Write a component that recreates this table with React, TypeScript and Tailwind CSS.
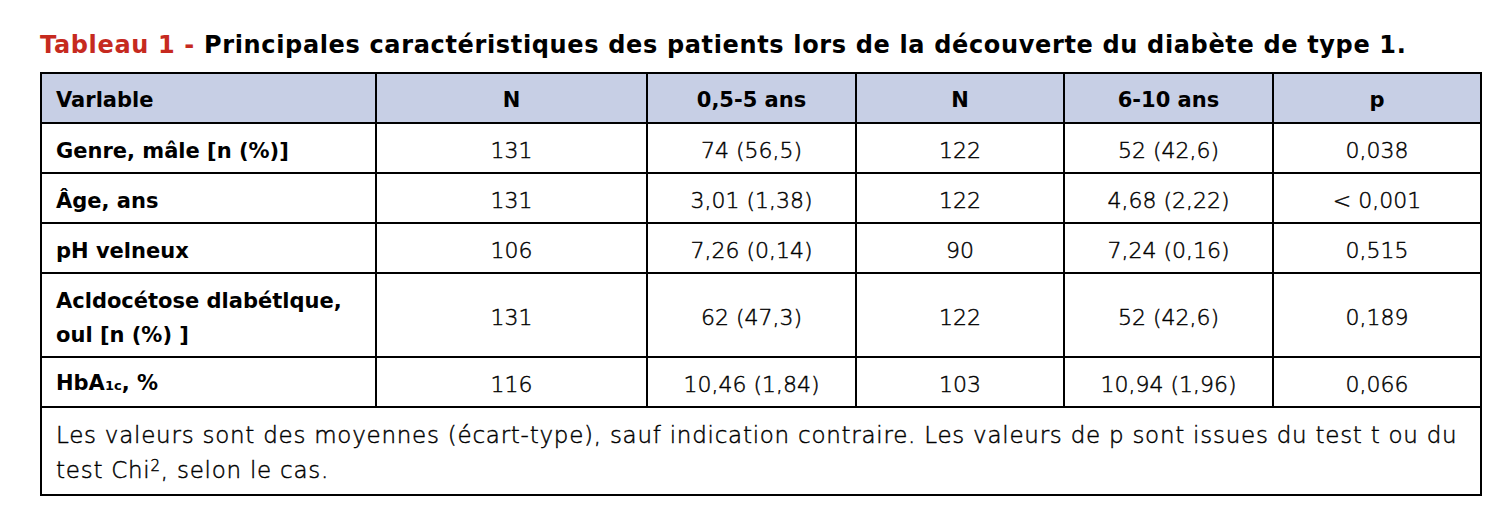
const rows: { label: React.ReactNode; cells: string[]; tall?: boolean }[] = [
  { label: "Genre, mâle [n (%)]", cells: ["131", "74 (56,5)", "122", "52 (42,6)", "0,038"] },
  { label: "Âge, ans", cells: ["131", "3,01 (1,38)", "122", "4,68 (2,22)", "< 0,001"] },
  { label: "pH velneux", cells: ["106", "7,26 (0,14)", "90", "7,24 (0,16)", "0,515"] },
  {
    label: (
      <>
        Acldocétose dlabétlque,
        <br />
        oul [n (%) ]
      </>
    ),
    cells: ["131", "62 (47,3)", "122", "52 (42,6)", "0,189"],
    tall: true,
  },
  {
    label: (
      <>
        HbA<span className="text-[13px]">1c</span>, %
      </>
    ),
    cells: ["116", "10,46 (1,84)", "103", "10,94 (1,96)", "0,066"],
  },
];

const headers = ["N", "0,5-5 ans", "N", "6-10 ans", "p"];

export default function App() {
  return (
    <div className="min-h-[524px] w-[1506px] bg-white pl-[40px] pt-[28px] font-['DejaVu_Sans',sans-serif] text-black">
      <h1 className="text-[24px] font-bold leading-[34px] tracking-[0.65px]">
        <span className="text-[#c62a1f]">Tableau 1 - </span>
        Principales caractéristiques des patients lors de la découverte du diabète de type 1.
      </h1>
      <table className="mt-[10px] w-[1440px] table-fixed border-collapse border-2 border-black text-[22px]">
        <colgroup>
          <col className="w-[335px]" />
          <col className="w-[271px]" />
          <col className="w-[209px]" />
          <col className="w-[208px]" />
          <col className="w-[209px]" />
          <col className="w-[208px]" />
        </colgroup>
        <thead>
          <tr className="h-[50px] bg-[#c7cfe5]">
            <th className="border-2 border-black px-[14px] pt-[6px] text-left text-[21px] font-bold">Varlable</th>
            {headers.map((h, i) => (
              <th key={i} className="border-2 border-black pt-[6px] text-center text-[21px] font-bold">
                {h}
              </th>
            ))}
          </tr>
        </thead>
        <tbody>
          {rows.map((r, i) => (
            <tr key={i} className={r.tall ? "h-[84px]" : "h-[50px]"}>
              <td className="border-2 border-black px-[14px] pt-[5px] text-[21px] font-bold leading-[34px]">{r.label}</td>
              {r.cells.map((c, j) => (
                <td key={j} className="border-2 border-black pt-[5px] text-center font-light [-webkit-text-stroke:0.45px_#000]">
                  {c}
                </td>
              ))}
            </tr>
          ))}
          <tr>
            <td colSpan={6} className="border-2 border-black px-[14px] pb-[6px] pt-[10px] text-[23px] font-light leading-[35px] tracking-[0.75px] [-webkit-text-stroke:0.45px_#000]">
              Les valeurs sont des moyennes (écart-type), sauf indication contraire. Les valeurs de p sont issues du test t ou du
              <br />
              test Chi<sup className="text-[15px]">2</sup>, selon le cas.
            </td>
          </tr>
        </tbody>
      </table>
    </div>
  );
}
